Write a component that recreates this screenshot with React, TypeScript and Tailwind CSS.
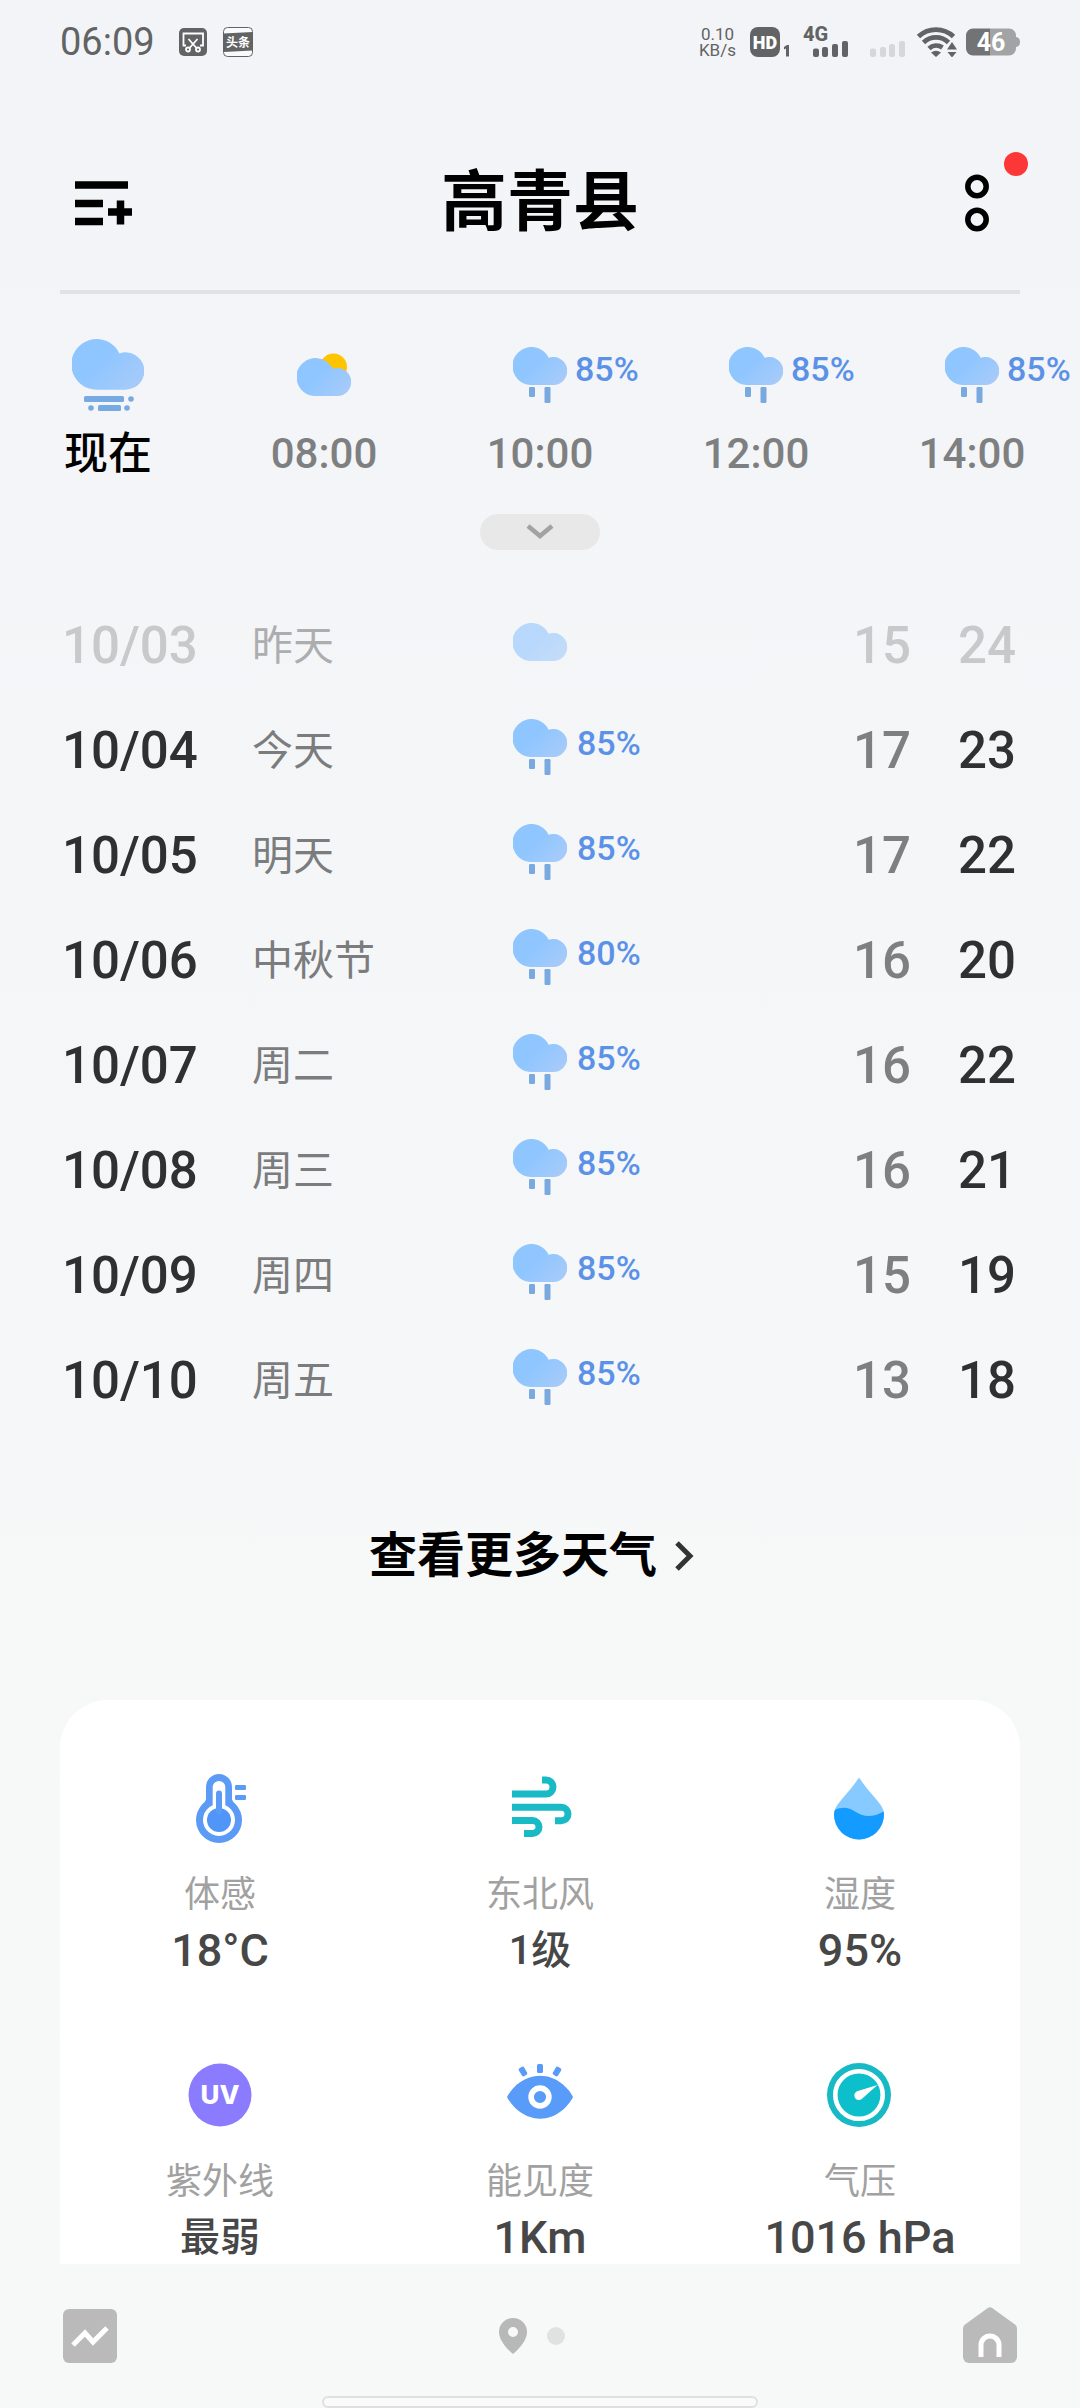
import React, { useState } from 'react'

type IconName = 'fog' | 'partly' | 'rain' | 'cloud'

const hours: { time: string; icon: IconName; chance?: string }[] = [
  { time: '现在', icon: 'fog' },
  { time: '08:00', icon: 'partly' },
  { time: '10:00', icon: 'rain', chance: '85%' },
  { time: '12:00', icon: 'rain', chance: '85%' },
  { time: '14:00', icon: 'rain', chance: '85%' },
]

const days: { date: string; name: string; icon: IconName; chance?: string; low: number; high: number }[] = [
  { date: '10/03', name: '昨天', icon: 'cloud', low: 15, high: 24 },
  { date: '10/04', name: '今天', icon: 'rain', chance: '85%', low: 17, high: 23 },
  { date: '10/05', name: '明天', icon: 'rain', chance: '85%', low: 17, high: 22 },
  { date: '10/06', name: '中秋节', icon: 'rain', chance: '80%', low: 16, high: 20 },
  { date: '10/07', name: '周二', icon: 'rain', chance: '85%', low: 16, high: 22 },
  { date: '10/08', name: '周三', icon: 'rain', chance: '85%', low: 16, high: 21 },
  { date: '10/09', name: '周四', icon: 'rain', chance: '85%', low: 15, high: 19 },
  { date: '10/10', name: '周五', icon: 'rain', chance: '85%', low: 13, high: 18 },
]

const CLOUD = 'M19 38A19 19 0 1 1 35.6 10.8A14 14 0 1 1 40.4 38Z'

const WeatherIcon = ({ name }: { name: IconName }) => {
  if (name === 'fog') {
    return (
      <svg className="h-[72px] w-[72px]" viewBox="0 0 72 72">
        <path d={CLOUD} transform="scale(1.333)" fill="url(#cloud)" />
        <g fill="#77a9e2">
          <rect x="12" y="57" width="40" height="6" rx="1.5" />
          <circle cx="59" cy="60" r="2.8" />
          <circle cx="19" cy="69" r="2.8" />
          <rect x="26" y="66" width="23" height="6" rx="1.5" />
          <circle cx="55" cy="69" r="2.8" />
        </g>
      </svg>
    )
  }
  if (name === 'partly') {
    return (
      <svg className="h-11 w-[54px]" viewBox="0 0 54 44">
        <circle cx="36.500" cy="14" r="13.5" fill="#ffc400" />
        <path d={CLOUD} transform="translate(0 5)" fill="url(#cloud)" />
      </svg>
    )
  }
  return (
    <svg className={name === 'rain' ? 'h-14 w-[54px]' : 'h-[38px] w-[54px]'} viewBox={name === 'rain' ? '0 0 54 56' : '0 0 54 38'}>
      <path d={CLOUD} fill="url(#cloud)" />
      {name === 'rain' && (
        <g fill="#7aa9e0">
          <rect x="16" y="40" width="6" height="10" rx="1.2" />
          <rect x="31.5" y="40" width="6" height="16" rx="1.2" />
        </g>
      )}
    </svg>
  )
}

const FeelsIcon = () => (
  <svg className="size-20" viewBox="0 0 80 80">
    <path d="M39 5a13 13 0 0 1 13 13v12.500q1 3 3.500 4.500a23 23 0 1 1-33 0q2.500-1.500 3.500-4.500V18a13 13 0 0 1 13-13z" fill="#5b9bf5" />
    <path d="M39 12a6.300 6.300 0 0 1 6.300 6.300V36.300a16 16 0 1 1-12.600 0V18.300a6.300 6.300 0 0 1 6.300-6.300z" fill="#fff" />
    <circle cx="39" cy="51" r="12" fill="#5096f8" />
    <rect x="36" y="21.500" width="6" height="24" rx="3" fill="#5b9bf5" />
    <rect x="55" y="16" width="11" height="5" rx="1.200" fill="#5b9bf5" />
    <rect x="55" y="26" width="11" height="5" rx="1.200" fill="#5b9bf5" />
  </svg>
)

const WindIcon = () => (
  <svg className="size-20" viewBox="0 0 80 80" fill="none" stroke="#18bac6" strokeWidth="7">
    <path d="M12 25H46a7 7 0 0 0 0-14h-4" />
    <path d="M12 38.300H61.300a6.700 6.700 0 0 1 0 13.400H55" />
    <path d="M12 51.500H32.500a6.500 6.500 0 0 1 0 13H24" />
  </svg>
)

const HumidityIcon = () => (
  <svg className="size-20" viewBox="0 0 80 80">
    <path d="M39 8.500C43 15 49 22 56 30C61 36 64 40 64 45.500A25 25 0 0 1 14 45.500C14 40 17 36 22 30C29 22 35 15 39 8.500z" fill="#86caff" />
    <path d="M15 41C21 37.500 29 38 35 42.500C42 47.500 52 49.500 63.500 42.500Q64 44 64 45.500A25 25 0 0 1 14 45.500Q14 43 15 41z" fill="#139bff" />
  </svg>
)

const UvIcon = () => (
  <svg className="size-20 font-['Inter',sans-serif]" viewBox="0 0 80 80">
    <circle cx="40" cy="39" r="31.500" fill="#8a7bff" />
    <text x="40" y="48" textAnchor="middle" fontSize="26" fontWeight="800" fill="#fff">UV</text>
  </svg>
)

const EyeIcon = () => (
  <svg className="size-20" viewBox="0 0 80 80">
    <path d="M7 41C12 31 24 19.700 40 19.700S68 31 73 41C68 51 56 62.700 40 62.700S12 51 7 41z" fill="#589bf8" />
    <circle cx="40" cy="41" r="8.900" fill="#589bf8" stroke="#fff" strokeWidth="5.600" />
    <g fill="#589bf8">
      <rect x="37" y="8" width="6" height="9" rx="1.500" />
      <rect x="20" y="11" width="6" height="9" rx="1.500" transform="rotate(-30 23 15.500)" />
      <rect x="54" y="11" width="6" height="9" rx="1.500" transform="rotate(30 57 15.500)" />
    </g>
  </svg>
)

const PressureIcon = () => (
  <svg className="size-20" viewBox="0 0 80 80">
    <circle cx="39" cy="39" r="32" fill="#17b9c4" />
    <circle cx="39" cy="39" r="23.700" fill="#0cbfca" stroke="#fff" strokeWidth="4.600" />
    <path d="M57.500 29L42 42.800A4.600 4.600 0 1 1 37 35.200z" fill="#fff" />
  </svg>
)

const details = [
  { label: '体感', value: '18°C', icon: <FeelsIcon /> },
  { label: '东北风', value: '1级', icon: <WindIcon /> },
  { label: '湿度', value: '95%', icon: <HumidityIcon /> },
  { label: '紫外线', value: '最弱', icon: <UvIcon /> },
  { label: '能见度', value: '1Km', icon: <EyeIcon /> },
  { label: '气压', value: '1016 hPa', icon: <PressureIcon /> },
]

const StatusBar = () => (
  <div className="flex h-[84px] items-center justify-between px-[60px] text-[#626364]">
    <div className="flex items-center">
      <span className="text-[38px] leading-[40px]">06:09</span>
      <svg className="ml-6 size-7" viewBox="0 0 28 28">
        <rect width="28" height="28" rx="5" fill="#626364" />
        <g fill="none" stroke="#fff" strokeWidth="1.8">
          <path d="M7 17.500H4.500V5.500H24V17.500H21" />
          <path d="M9.500 11L17.500 20M18.500 11L10.500 20" />
          <circle cx="9" cy="21.500" r="2" />
          <circle cx="19" cy="21.500" r="2" />
        </g>
      </svg>
      <svg className="ml-4 size-[30px]" viewBox="0 0 30 30">
        <rect x="0.500" y="0.500" width="29" height="29" rx="4" fill="#f9fafb" stroke="#626364" />
        <path d="M0.500 6.500L29.500 5V23.500L0.500 25z" fill="#626364" />
        <text x="15" y="19.500" textAnchor="middle" fontSize="12" fontWeight="700" fill="#fff">头条</text>
      </svg>
    </div>
    <div className="flex items-center">
      <div className="text-center text-[17px] leading-4">
        <div>0.10</div>
        <div>KB/s</div>
      </div>
      <svg className="ml-[14px] h-[30px] w-10" viewBox="0 0 40 30">
        <rect width="30" height="30" rx="8" fill="#626364" />
        <text x="15" y="21.500" textAnchor="middle" fontSize="18" fontWeight="900" fill="#fff">HD</text>
        <path d="M39 18V29.500H36V21.500L34 22.500V20L37 18z" fill="#626364" />
      </svg>
      <svg className="ml-3 h-[42px] w-[46px]" viewBox="-2 -6 46 42" fill="#626364">
        <text x="-1" y="14" fontSize="20" fontWeight="800">4G</text>
        <rect x="9" y="21.500" width="6" height="8.500" rx="2" />
        <rect x="18" y="20" width="6" height="10" rx="2" />
        <rect x="28" y="17" width="6" height="13" rx="2" />
        <rect x="38" y="14" width="6" height="16" rx="2" />
      </svg>
      <svg className="ml-[22px] h-[30px] w-9" viewBox="0 0 36 30" fill="#d6d7d8">
        <rect x="0" y="21.500" width="6" height="8.500" rx="2" />
        <rect x="10" y="20" width="6" height="10" rx="2" />
        <rect x="19" y="17" width="6" height="13" rx="2" />
        <rect x="29" y="14" width="6" height="16" rx="2" />
      </svg>
      <svg className="ml-[11px] h-[30px] w-10" viewBox="0 0 40 30" fill="none" stroke="#626364" strokeWidth="4.800">
        <path d="M1.500 9.500A25.500 25.500 0 0 1 36.500 9.500" />
        <path d="M6.500 15.500A18 18 0 0 1 31.500 15.500" />
        <path d="M12 21.500A11 11 0 0 1 25.500 20.500" />
        <path d="M14 25.500Q19 22 24 25.500L19 30z" fill="#626364" stroke="none" />
        <path d="M35 15L40 22.500H30zM30.500 25H39.500L35 30.500z" fill="#626364" stroke="none" />
      </svg>
      <svg className="ml-[9px] h-7 w-[54px]" viewBox="0 0 54 28">
        <path d="M24 0.500H43a7 7 0 0 1 7 7V9q4 0.500 4 5t-4 5v1.500a7 7 0 0 1-7 7H24z" fill="#a2a3a4" />
        <path d="M24 0.500H7a7 7 0 0 0-7 7V20.500a7 7 0 0 0 7 7H24z" fill="#727374" />
        <text x="25" y="23" textAnchor="middle" fontSize="25" fontWeight="700" fill="#fff">46</text>
      </svg>
    </div>
  </div>
)

const App = () => {
  const [expanded, setExpanded] = useState(false)

  return (
    <div className="flex min-h-screen flex-col bg-linear-to-b from-[#f3f4f7] via-[#f5f6f8] via-40% to-[#f7f8f8] to-70% font-['Roboto','Noto_Sans_CJK_SC',sans-serif]">
      <svg className="absolute size-0" aria-hidden="true">
        <defs>
          <linearGradient id="cloud" x1="0" y1="0.2" x2="1" y2="0.9">
            <stop offset="0.4" stopColor="#8fc6ff" />
            <stop offset="1" stopColor="#a9cbf9" />
          </linearGradient>
        </defs>
      </svg>

      <StatusBar />

      <header className="flex h-[206px] items-center justify-between px-[52px] pt-7">
        <button type="button" aria-label="城市管理" className="h-20 w-[84px]">
          <svg className="h-20 w-[84px]" viewBox="0 0 84 80" fill="none" stroke="#000" strokeWidth="7.500">
            <path d="M23 24H76M23 42.500H51M23 60.500H51M56 51H80M68.500 39.500V63.500" strokeLinejoin="round" />
          </svg>
        </button>
        <h1 className="pt-1 text-[66px] leading-[72px] font-bold text-black">高青县</h1>
        <button type="button" aria-label="更多" className="relative h-20 w-[84px]">
          <svg className="h-20 w-[84px]" viewBox="0 0 84 80" fill="none" stroke="#000" strokeWidth="5.500">
            <circle cx="33" cy="25.500" r="9.200" />
            <circle cx="33" cy="58.500" r="9.200" />
          </svg>
          <span className="absolute -top-[9px] right-0 size-6 rounded-full bg-[#fb3737]" />
        </button>
      </header>
      <hr className="mx-[60px] border-t-4 border-[#e1e2e4]" />

      <ul className="mt-[45px] grid grid-cols-5">
        {hours.map((hour) => (
          <li key={hour.time}>
            <div className="grid h-[72px] grid-cols-[1fr_auto_1fr] items-center">
              <span />
              <WeatherIcon name={hour.icon} />
              <span className="h-14 pl-2 text-[34px] leading-[44px] font-medium text-[#5b92e8]">{hour.chance}</span>
            </div>
            <p className={`mt-[18px] text-center leading-[50px] font-medium ${hour.time === '现在' ? 'text-[44px] text-black' : 'text-[42px] text-[#7e7f81]'}`}>
              {hour.time}
            </p>
          </li>
        ))}
      </ul>

      <button
        type="button"
        aria-label="展开"
        aria-expanded={expanded}
        onClick={() => setExpanded(!expanded)}
        className="mt-[35px] flex h-9 w-[120px] items-center justify-center self-center rounded-full bg-[#e8e8e8]"
      >
        <svg className="h-4 w-7" viewBox="0 0 28 16" fill="none" stroke="#a2a2a2" strokeWidth="4.500">
          <path d="M2 2L14 12L26 2" />
        </svg>
      </button>

      <div className="mt-[43px] pr-16 pl-[62px]">
        <table className="w-full table-fixed">
          <tbody>
            {days.map((day, i) => (
              <tr key={day.date} className="h-[105px] text-[51px] leading-[60px] font-medium">
                <th scope="row" className={`w-[190px] text-left font-medium ${i === 0 ? 'text-[#c8c9ca]' : 'text-[#2f3032]'}`}>
                  {day.date}
                </th>
                <td className={`w-[261px] text-[41px] font-normal ${i === 0 ? 'text-[#acadae]' : 'text-[#7b7c7d]'}`}>{day.name}</td>
                <td>
                  <div className={`flex items-start gap-[10px] pb-2 ${i === 0 ? 'opacity-60' : ''}`}>
                    <WeatherIcon name={day.icon} />
                    <span className="text-[34px] leading-[48px] text-[#5b92e8]">{day.chance}</span>
                  </div>
                </td>
                <td className={`w-[100px] text-right ${i === 0 ? 'text-[#c8c9ca]' : 'text-[#7e7f80]'}`}>{day.low}</td>
                <td className={`w-[105px] text-right ${i === 0 ? 'text-[#c8c9ca]' : 'text-[#2f3032]'}`}>{day.high}</td>
              </tr>
            ))}
          </tbody>
        </table>
      </div>

      <a href="#more" className="mt-[91px] flex items-center gap-[18px] self-center pr-4 text-[48px] leading-[64px] font-bold text-black">
        查看更多天气
        <svg className="h-8 w-5" viewBox="0 0 20 32" fill="none" stroke="#333" strokeWidth="5">
          <path d="M2 3L15 16L2 29" />
        </svg>
      </a>

      <section className="mx-[60px] mt-28 grid flex-1 grid-cols-3 content-start gap-y-[81px] rounded-t-[48px] bg-white pt-[69px]">
        {details.map((item) => (
          <div key={item.label} className="flex flex-col items-center">
            {item.icon}
            <p className="mt-[22px] text-[36px] leading-[48px] text-[#a1a1a1]">{item.label}</p>
            <p className={`mt-2 leading-[48px] font-medium text-[#474747] ${/[级弱]/.test(item.value) ? 'text-[40px]' : 'text-[45px]'}`}>
              {item.value}
            </p>
          </div>
        ))}
      </section>

      <nav className="flex h-[144px] flex-col items-center justify-between pt-[43px]">
        <div className="flex w-full items-center justify-between px-[62px]">
          <button type="button" aria-label="趋势" className="h-[57px]">
            <svg className="h-[57px] w-[56px]" viewBox="0 0 56 57">
              <rect x="1" y="2" width="54" height="54" rx="6" fill="#bababa" />
              <path d="M11 38L23 26L31 35L45 21" fill="none" stroke="#fff" strokeWidth="5" />
            </svg>
          </button>
          <div className="flex items-center gap-5 pr-4">
            <svg className="h-9 w-7" viewBox="0 0 28 36">
              <path d="M14 0A14 14 0 0 1 28 14C28 22 21 30 14 36C7 30 0 22 0 14A14 14 0 0 1 14 0zM14 9a5 5 0 1 0 0 10a5 5 0 1 0 0-10z" fill="#b8b8b8" />
            </svg>
            <span className="size-[18px] rounded-full bg-[#e1e1e1]" />
          </div>
          <button type="button" aria-label="主页" className="h-[57px]">
            <svg className="h-[57px] w-[56px]" viewBox="0 0 56 57">
              <path d="M25.500 1.200Q28 -0.500 30.500 1.200L53 17.500Q55 19 55 21.500V50a6 6 0 0 1-6 6H7a6 6 0 0 1-6-6V21.500Q1 19 3 17.500z" fill="#bababa" />
              <path d="M19 50V38a9 9 0 0 1 18 0V50" fill="none" stroke="#fff" strokeWidth="5" />
            </svg>
          </button>
        </div>
        <div className="h-3 w-[436px] rounded-full border-2 border-[#e0e0e0] bg-[#fafafa]" />
      </nav>
    </div>
  )
}

export default App
